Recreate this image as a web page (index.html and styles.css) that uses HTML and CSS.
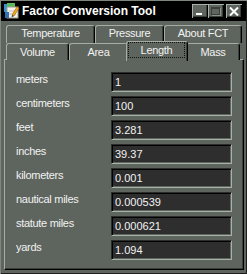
FILE: index.html
```html
<!DOCTYPE html>
<html>
<head>
<meta charset="utf-8">
<link rel="stylesheet" href="styles.css">
</head>
<body>
<div class="window">
  <div class="titlebar">
    <svg class="app-icon" width="16" height="16" viewBox="0 0 16 16">
      <rect x="0" y="1" width="8" height="8" fill="#3a8fd0"/>
      <rect x="3" y="0" width="8" height="7" fill="#5cb85c"/>
      <rect x="3" y="4" width="11" height="11" fill="#f4f4ea" stroke="#9aa08a" stroke-width="1"/>
      <rect x="1" y="9" width="4" height="6" fill="#3070b8"/>
      <line x1="5" y1="8" x2="13" y2="8" stroke="#c0c0c0"/>
      <line x1="5" y1="11" x2="12" y2="11" stroke="#c0c0c0"/>
      <path d="M8 12 L13 4 L15 5 L10 13 Z" fill="#f0b020" stroke="#b06010" stroke-width="0.7"/>
      <path d="M8 12 L10 13 L7.5 14.5 Z" fill="#404040"/>
    </svg>
    <span class="title">Factor Conversion Tool</span>
    <div class="controls">
      <span class="btn btn-min"><span class="min-bar"></span></span>
      <span class="btn btn-max"><span class="max-box"></span></span>
      <span class="btn btn-close">
        <svg width="10" height="9" viewBox="0 0 10 9"><path d="M1 0.5 L9 8.5 M9 0.5 L1 8.5" stroke="#fff" stroke-width="2"/></svg>
      </span>
    </div>
  </div>

  <div class="tabs">
    <div class="tabrow back">
      <div class="tab t-temp">Temperature</div>
      <div class="tab t-pres">Pressure</div>
      <div class="tab t-about">About FCT</div>
    </div>
    <div class="tabrow front">
      <div class="tab t-vol">Volume</div>
      <div class="tab t-area">Area</div>
      <div class="tab t-len selected"><span class="focus">Length</span></div>
      <div class="tab t-mass">Mass</div>
    </div>
  </div>

  <div class="panel">
    <div class="row"><span class="label">meters</span><div class="field">1</div></div>
    <div class="row"><span class="label">centimeters</span><div class="field">100</div></div>
    <div class="row"><span class="label">feet</span><div class="field">3.281</div></div>
    <div class="row"><span class="label">inches</span><div class="field">39.37</div></div>
    <div class="row"><span class="label">kilometers</span><div class="field">0.001</div></div>
    <div class="row"><span class="label">nautical miles</span><div class="field">0.000539</div></div>
    <div class="row"><span class="label">statute miles</span><div class="field">0.000621</div></div>
    <div class="row"><span class="label">yards</span><div class="field">1.094</div></div>
  </div>
</div>
</body>
</html>
```
FILE: styles.css
```css
* { box-sizing: border-box; }
html, body { margin: 0; padding: 0; background: #5e655e; }
body { font-family: "Liberation Sans", Arial, sans-serif; }

.window {
  width: 247px;
  height: 274px;
  padding: 1px;
  background: #5e655e;
  box-shadow: inset 1px 1px 0 #7e867e, inset -1px -1px 0 #1c1f1c;
}

.titlebar {
  height: 20px;
  background: #000;
  display: flex;
  align-items: center;
  padding-left: 3px;
  padding-right: 4px;
}
.app-icon { flex: none; margin-right: 2px; }
.title {
  color: #fff;
  font-weight: bold;
  font-size: 12px;
  line-height: 14px;
  white-space: nowrap;
}
.controls { margin-left: auto; display: flex; align-items: center; }
.btn {
  width: 16px;
  height: 14px;
  background: #5e655e;
  box-shadow: inset 1px 1px 0 #a9b1a9, inset -1px -1px 0 #000, inset -2px -2px 0 #3a3f3a;
  display: flex;
  position: relative;
}
.btn-close { margin-left: 2px; align-items: center; justify-content: center; }
.min-bar {
  width: 6px; height: 2px; background: #fff;
  margin: 9px 0 0 4px;
}
.max-box {
  width: 9px; height: 8px;
  margin: 3px 0 0 3px;
  border: 1px solid #3a3f3a;
  border-top-width: 2px;
  box-shadow: 1px 1px 0 #8a928a;
}

.tabs { padding: 4px 0 0 5px; }
.tabrow { display: flex; height: 18px; }
.tabrow.front { height: 16px; }
.tab {
  height: 18px;
  color: #f2f2f2;
  font-size: 11px;
  letter-spacing: -0.3px;
  line-height: 15px;
  text-align: center;
  border-top: 1px solid #a5ada5;
  border-left: 1px solid #a5ada5;
  border-right: 1px solid #000;
  border-radius: 3px 3px 0 0;
  box-shadow: inset -1px 0 0 #3a3f3a;
  background: #5e655e;
  white-space: nowrap;
}
.front .tab { line-height: 16px; height: 17px; }
.t-temp { width: 89px; }
.t-pres { width: 69px; }
.t-about { width: 78px; }
.t-vol { width: 63px; }
.t-area { width: 59px; }
.t-len { width: 58px; }
.t-mass { width: 54px; }
.tab.selected {
  height: 20px;
  margin: -2px -2px 0 -2px;
  width: 62px;
  position: relative;
  z-index: 1;
  padding: 0 2px 0 1px;
}
.focus {
  display: block;
  border: 1px dotted #e0e0e0;
  outline: 1px dotted #111;
  outline-offset: -1px;
  line-height: 14px;
  height: 16px;
}

.panel {
  margin: 0 0 0 3px;
  width: 240px;
  height: 211px;
  border-top: 1px solid #a5ada5;
  border-left: 1px solid #a5ada5;
  border-right: 1px solid #000;
  border-bottom: 1px solid #000;
  box-shadow: inset -1px -1px 0 #3a3f3a;
  padding: 12px 0 0 11px;
  display: flex;
  flex-direction: column;
  gap: 4px;
}
.row {
  display: grid;
  grid-template-columns: 95px 121px;
  height: 20px;
}
.label {
  color: #f2f2f2;
  font-size: 11px;
  letter-spacing: -0.3px;
  line-height: 14px;
  white-space: nowrap;
}
.field {
  height: 20px;
  background: #2e2e2e;
  border-top: 1px solid #2a2d2a;
  border-left: 1px solid #2a2d2a;
  border-right: 1px solid #a9b1a9;
  border-bottom: 1px solid #a9b1a9;
  box-shadow: inset 1px 1px 0 #000, inset -1px -1px 0 #5e655e;
  color: #f2f2f2;
  font-size: 11px;
  line-height: 18px;
  padding-left: 3px;
}
```
